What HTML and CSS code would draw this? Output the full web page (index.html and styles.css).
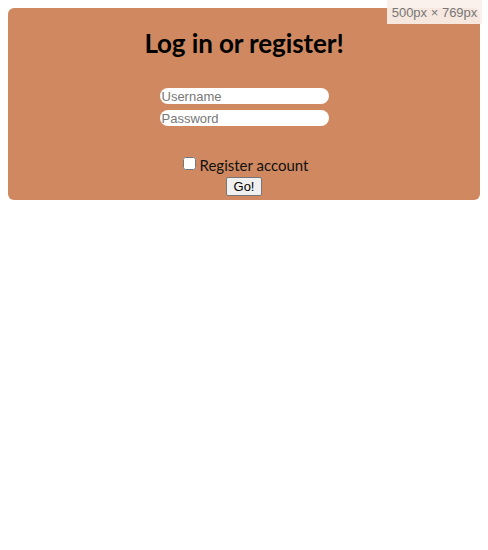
FILE: index.html
```html
<!DOCTYPE html>
<html>
<head>
<meta charset="utf-8">
<link rel="stylesheet" href="styles.css">
</head>
<body>
<div class="card">
  <h1 class="title">Log in or register!</h1>
  <form class="form">
    <input class="field" type="text" placeholder="Username">
    <input class="field" type="password" placeholder="Password">
    <label class="check"><input type="checkbox" class="box">Register account</label>
    <button type="button" class="go">Go!</button>
  </form>
</div>
<div class="size-badge">500px × 769px</div>
</body>
</html>
```
FILE: styles.css
```css
html, body { margin: 0; padding: 0; background: #fff; }
body { padding: 8px; font-family: "Lato", "Open Sans", sans-serif; }
.card {
  background: #cf8860;
  border-radius: 6px;
  height: 192px;
  box-sizing: border-box;
  padding-top: 21px;
  display: flex;
  flex-direction: column;
  align-items: center;
}
.title {
  margin: 0;
  font-family: "Lato", sans-serif;
  font-weight: 700;
  font-size: 26px;
  line-height: 28px;
  color: #000;
  letter-spacing: -0.1px;
}
.form {
  display: flex;
  flex-direction: column;
  align-items: center;
  margin-top: 31px;
}
.field {
  width: 169px;
  height: 16px;
  box-sizing: border-box;
  border: none;
  border-radius: 8px;
  background: #fff;
  padding: 0 2px;
  margin: 0 0 6px 0;
  font-family: "Liberation Sans", Arial, sans-serif;
  font-size: 13px;
  outline: none;
}
.field::placeholder { color: #777; }
.check {
  margin-top: 24px;
  display: flex;
  align-items: center;
  font-family: "Lato", sans-serif;
  font-size: 15px;
  line-height: 18px;
  color: #111;
}
.box {
  width: 13px;
  height: 13px;
  margin: 0 4px 3px 3px;
}
.go {
  margin-top: 3px;
  width: 36px;
  height: 19px;
  padding: 0;
  font-family: "Liberation Sans", Arial, sans-serif;
  font-size: 13px;
  background: #f0f0f0;
  border: 1px solid #767676;
  border-radius: 2px;
  color: #000;
}
.size-badge {
  position: absolute;
  top: 0;
  right: 6px;
  width: 95px;
  height: 24px;
  background: rgba(250, 240, 234, 0.92);
  color: #777;
  font-family: "Liberation Sans", Arial, sans-serif;
  font-size: 13px;
  line-height: 26px;
  text-align: center;
}
```
